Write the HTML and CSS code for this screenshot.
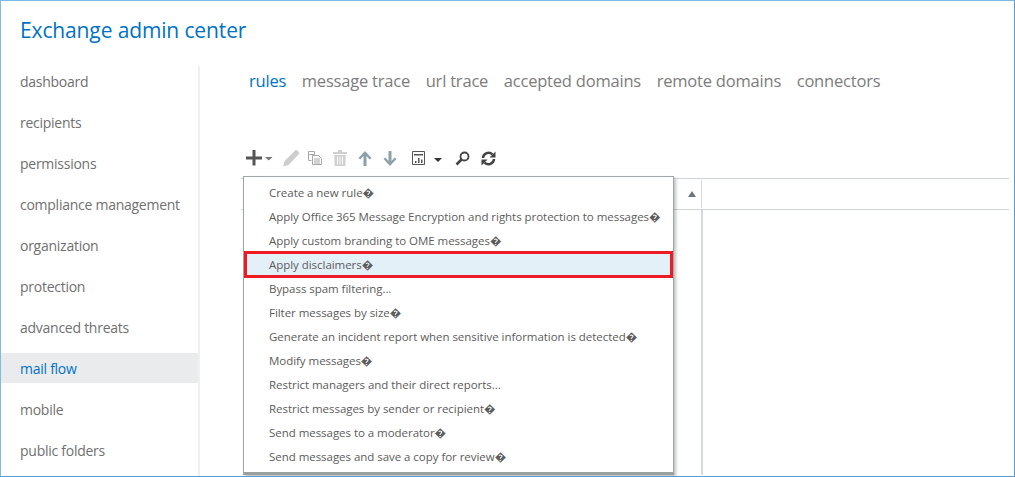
FILE: index.html
```html
<!DOCTYPE html>
<html lang="en">
<head>
<meta charset="utf-8">
<title>Exchange admin center</title>
<link rel="stylesheet" href="styles.css">
</head>
<body>
<div class="window">
  <h1 class="title">Exchange admin center</h1>
  <div class="main">
    <nav class="sidebar">
      <a class="nav-item">dashboard</a>
      <a class="nav-item">recipients</a>
      <a class="nav-item">permissions</a>
      <a class="nav-item">compliance management</a>
      <a class="nav-item">organization</a>
      <a class="nav-item">protection</a>
      <a class="nav-item">advanced threats</a>
      <a class="nav-item active">mail flow</a>
      <a class="nav-item">mobile</a>
      <a class="nav-item">public folders</a>
    </nav>
    <section class="content">
      <div class="tabs">
        <a class="tab active">rules</a>
        <a class="tab">message trace</a>
        <a class="tab">url trace</a>
        <a class="tab">accepted domains</a>
        <a class="tab">remote domains</a>
        <a class="tab">connectors</a>
      </div>
      <div class="toolbar">
        <svg class="ico plus" width="29" height="16" viewBox="0 0 29 16"><path d="M1 6.500h16v3H1zM7.500 0h3v15.500h-3z" fill="#555"/><path d="M20 7h7.500l-3.750 3.500z" fill="#777"/></svg>
        <svg class="ico edit" width="17" height="18" viewBox="0 0 17 18"><path d="M0 17.500l1.500-5.500L12 1.500q1-1 2-.2l2 2q.8 1-.2 2L5.500 16z" fill="#cdcdcd"/></svg>
        <svg class="ico copy" width="16" height="16" viewBox="0 0 16 16" fill="none" stroke="#a8a8a8"><path d="M1.500 1.500h6v3h-6zM1.500 4.500v6h3M5.500 5.500h6l3 3v6h-9zM7 9h6M7 11h6M7 13h6"/></svg>
        <svg class="ico trash" width="14" height="16" viewBox="0 0 14 16" fill="#cfcfcf"><path d="M0 2h14v2H0zM5 0h4v2H5zM1.500 5h11v11h-11z"/><path d="M4 6.500h1v8H4zM6.500 6.500h1v8h-1zM9 6.500h1v8H9z" fill="#fff"/></svg>
        <svg class="ico up" width="14" height="15" viewBox="0 0 14 15"><path d="M7 0l6.500 7-1.800 1.500L8.500 5v10h-3V5L2.300 8.500.500 7z" fill="#8ca1a8"/></svg>
        <svg class="ico down" width="14" height="15" viewBox="0 0 14 15"><path d="M7 15L.500 8l1.800-1.500L5.500 10V0h3v10l3.200-3.500L13.500 8z" fill="#8ca1a8"/></svg>
        <svg class="ico report" width="13" height="14" viewBox="0 0 13 14"><path d="M.500.500h12v13H.500z" fill="#fff" stroke="#555"/><path d="M2 3h9v1.500H2zM3 10h1.500v2H3zM6 7h1.500v5H6zM9 8.500h1.500V12H9z" fill="#555"/></svg>
        <svg class="ico caret" width="8" height="4" viewBox="0 0 8 4"><path d="M0 0h8L4 4z" fill="#333"/></svg>
        <svg class="ico search" width="15" height="15" viewBox="0 0 15 15" fill="none" stroke="#444"><circle cx="9.500" cy="5.500" r="4" stroke-width="1.800"/><path d="M6.500 8.500L1.500 13.500" stroke-width="2.600"/></svg>
        <svg class="ico refresh" width="15" height="15" viewBox="0 0 15 15" fill="none" stroke="#444" stroke-width="2.500"><path d="M2 7a5.500 5.500 0 0 1 9.500-3.500M13 8a5.500 5.500 0 0 1-9.500 3.500"/><path d="M14.500.500v6h-6zM.500 14.500v-6h6z" fill="#444" stroke="none"/></svg>
      </div>
      <div class="table">
        <div class="thead">
          <div class="col-main"><svg class="sort" width="8" height="6" viewBox="0 0 8 6"><path d="M4 0l4 6H0z" fill="#6e7480"/></svg></div>
          <div class="col-rest"></div>
        </div>
        <div class="tbody"><div class="tbody-main"></div><div class="tbody-rest"></div></div>
      </div>
      <ul class="menu">
        <li class="menu-item">Create a new rule�</li>
        <li class="menu-item">Apply Office 365 Message Encryption and rights protection to messages�</li>
        <li class="menu-item">Apply custom branding to OME messages�</li>
        <li class="menu-item selected">Apply disclaimers�</li>
        <li class="menu-item">Bypass spam filtering...</li>
        <li class="menu-item">Filter messages by size�</li>
        <li class="menu-item">Generate an incident report when sensitive information is detected�</li>
        <li class="menu-item">Modify messages�</li>
        <li class="menu-item">Restrict managers and their direct reports...</li>
        <li class="menu-item">Restrict messages by sender or recipient�</li>
        <li class="menu-item">Send messages to a moderator�</li>
        <li class="menu-item">Send messages and save a copy for review�</li>
      </ul>
    </section>
  </div>
</div>
</body>
</html>
```
FILE: styles.css
```css
* { box-sizing: border-box; }
html, body { margin: 0; height: 100%; overflow: hidden; background: #fff; }
.window {
  width: 1015px; height: 477px;
  border: 1px solid #5a9bcf; border-top-color: #7dbbe6; border-left-color: #7dbbe6;
  display: flex; flex-direction: column; overflow: hidden;
  font-family: "Open Sans", "Noto Sans", sans-serif; color: #707070;
}
.title {
  margin: 0; padding: 15px 0 0 19px; height: 65px;
  font-size: 21px; font-weight: 400; line-height: 28px; color: #0072c6;
  letter-spacing: -0.130px;
}
.main { flex: 1; display: flex; min-height: 0; }
.sidebar { width: 199px; flex: none; border-right: 2px solid #f0f0f0; }
.nav-item {
  display: block; height: 30px; line-height: 32px; margin-bottom: 11px;
  padding-left: 19px; font-size: 14px; letter-spacing: -0.260px; color: #707070;
}
.nav-item.active { background: #eaebec; color: #0072c6; }
.content { position: relative; flex: 1; min-width: 0; padding-left: 41px; }
.tabs { display: flex; gap: 15.600px; height: 30px; margin-left: 8px; align-items: center; }
.tab { font-size: 16.500px; letter-spacing: -0.200px; color: #7c7c7c; line-height: 30px; }
.tab.active { color: #0072c6; }
.toolbar { display: flex; align-items: center; height: 20px; margin-top: 52px; margin-left: 4px; }
.ico { flex: none; display: block; }
.edit { margin-left: 9px; }
.copy { margin-left: 7px; }
.trash { margin-left: 10px; }
.up { margin-left: 11px; }
.down { margin-left: 11px; }
.report { margin-left: 15px; }
.caret { margin-left: 9px; margin-top: 3px; }
.search { margin-left: 13px; }
.refresh { margin-left: 11px; }
.table { margin-top: 10px; margin-right: 5px; }
.thead { display: flex; height: 32px; border-top: 1px solid #cfd6da; border-bottom: 1px solid #cfd6da; }
.col-main { width: 461px; display: flex; align-items: center; justify-content: flex-end; padding-right: 5px; border-right: 1px solid #d5dade; margin: 1px 0; }
.col-rest { flex: 1; }
.tbody { display: flex; height: 265px; }
.tbody-main { width: 462px; border-right: 2px solid #d5dade; }
.tbody-rest { flex: 1; }
.menu {
  position: absolute; left: 43px; top: 110px; width: 431px; height: 299px;
  margin: 0; padding: 4px 0 0; list-style: none; background: #fff;
  border: 1px solid #9ea8a8; border-bottom: 3px solid #9a9f9f;
  box-shadow: 2px 2px 3px rgba(0,0,0,.25);
}
.menu-item {
  height: 24px; line-height: 24px; padding-left: 25px;
  font-size: 11.500px; letter-spacing: -0.040px; color: #5c5c5c; white-space: nowrap;
}
.menu-item.selected {
  background: #e4f0f8; outline: 3px solid #ed1c24; outline-offset: -3px;
  height: 27px; margin: -2px 0 -1px; padding-top: 2px;
}
```
